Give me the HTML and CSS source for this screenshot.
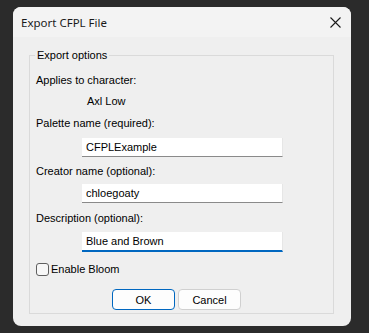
FILE: index.html
```html
<!DOCTYPE html>
<html lang="en">
<head>
  <meta charset="UTF-8" />
  <title>Export CFPL File</title>
  <link rel="stylesheet" href="styles.css">
</head>
<body>
  <div class="dialog">
    <div class="titlebar">
      <span class="title">Export CFPL File</span>
      <svg class="close" width="11" height="11" viewBox="0 0 11 11">
        <path d="M0.5 0.5 L10.5 10.5 M10.5 0.5 L0.5 10.5" stroke="#1b1b1b" stroke-width="1.1" fill="none"/>
      </svg>
    </div>
    <div class="content">
      <fieldset class="group">
        <legend>Export options</legend>
        <div class="label first">Applies to character:</div>
        <div class="value">Axl Low</div>
        <div class="label">Palette name (required):</div>
        <input class="field palette" type="text" value="CFPLExample">
        <div class="label">Creator name (optional):</div>
        <input class="field creator" type="text" value="chloegoaty">
        <div class="label desc">Description (optional):</div>
        <input class="field focused" type="text" value="Blue and Brown">
        <label class="check">
          <span class="box"></span>
          <span>Enable Bloom</span>
        </label>
        <div class="buttons">
          <button class="btn default">OK</button>
          <button class="btn">Cancel</button>
        </div>
      </fieldset>
    </div>
  </div>
</body>
</html>
```

FILE: styles.css
```css
* {
  box-sizing: border-box;
}

body {
  margin: 0;
  background: #2b2b2b;
  font-family: 'Liberation Sans', Arial, sans-serif;
  font-size: 11px;
  color: #000;
  height: 333px;
  padding: 7px 0 0 13px;
}

.dialog {
  width: 338px;
  height: 319px;
  background: #efefef;
  border-radius: 8px;
  overflow: hidden;
}

.titlebar {
  height: 30px;
  background: #f3f3f3;
  display: flex;
  align-items: center;
  justify-content: space-between;
  padding: 0 10px 0 8px;
}

.title {
  font-family: 'Noto Sans', 'Open Sans', sans-serif;
  font-size: 11.5px;
  color: #1a1a1a;
}

.close {
  display: block;
}

.content {
  padding: 11px 17px 0 16px;
}

.group {
  margin: 0;
  padding: 0 0 2px 6px;
  border: 1px solid #dadada;
  height: 266px;
}

.group legend {
  margin-left: -1px;
  padding: 0 2px;
  line-height: 14px;
}

.label,
.value {
  line-height: 16px;
  margin-top: 6px;
}

.label.first {
  margin-top: 10px;
}

.value {
  margin-top: 5px;
  padding-left: 51px;
}

.label.desc {
  margin-top: 7px;
}

.field {
  display: block;
  margin: 6px 0 0 46px;
  width: 201px;
  height: 19px;
  border: none;
  border-right: 1px solid #e6e6e6;
  border-bottom: 1px solid #8a8a8a;
  background: #fff;
  padding: 0 4px;
  font-family: inherit;
  font-size: 11px;
  color: #000;
  outline: none;
}

.field.palette {
  margin-top: 7px;
}

.field.creator {
  margin-top: 5px;
}

.field.focused {
  border-bottom: 2px solid #0067c0;
  height: 20px;
}

.check {
  display: flex;
  align-items: center;
  gap: 2px;
  margin-top: 9px;
  line-height: 16px;
}

.box {
  width: 13px;
  height: 13px;
  border: 1px solid #5f5f5f;
  border-radius: 3px;
  background: #f7f7f7;
}

.buttons {
  display: flex;
  gap: 3px;
  margin: 12px 0 0 76px;
}

.btn {
  width: 63px;
  height: 21px;
  background: #fdfdfd;
  border: 1px solid #d0d0d0;
  border-radius: 4px;
  font-family: inherit;
  font-size: 11px;
  color: #000;
  padding: 0;
}

.btn.default {
  border-color: #0067c0;
}
```
